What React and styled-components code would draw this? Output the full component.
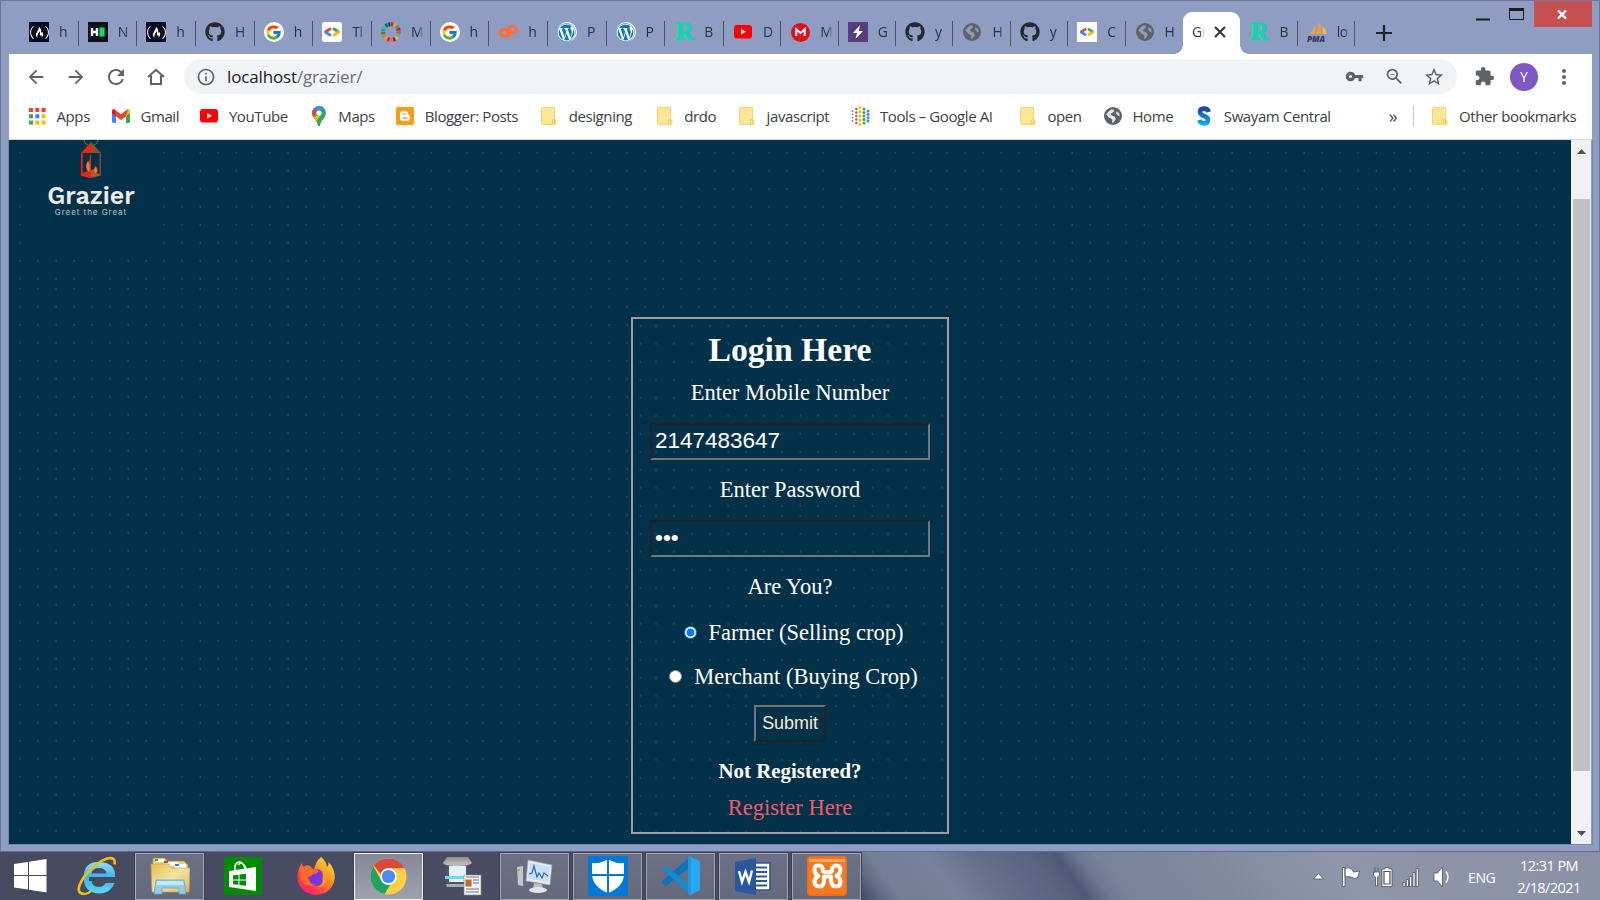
import React from "react";
import styled, { createGlobalStyle, css } from "styled-components";
import {
  MdArrowBack, MdArrowForward, MdRefresh, MdInfoOutline, MdVpnKey,
  MdZoomOut, MdStarBorder, MdExtension, MdMoreVert,
} from "react-icons/md";
import { FaFreeCodeCamp, FaGithub, FaWordpress } from "react-icons/fa";
import { FcGoogle } from "react-icons/fc";

const UI_FONT = `"Open Sans", "Noto Sans", sans-serif`;

const dotTile = (color) => {
  let dots = "";
  for (let r = 0; r < 11; r++)
    for (let c = 0; c < 13; c++)
      dots += `<rect x='${10.3 + c * 18}' y='${4.8 + r * 18}' width='1.4' height='2'/>`;
  return `url("data:image/svg+xml,${encodeURIComponent(
    `<svg xmlns='http://www.w3.org/2000/svg' width='231.67' height='190' fill='${color}'>${dots}</svg>`
  )}")`;
};

const GlobalStyle = createGlobalStyle`
  * { box-sizing: border-box; }
  body { margin: 0; overflow: hidden; background: #8f9dc3; }
  svg { display: block; flex: none; }
`;

const Desktop = styled.div`
  width: 1600px;
  height: 900px;
  display: flex;
  flex-direction: column;
  font-family: ${UI_FONT};
`;

const BrowserWindow = styled.div`
  height: 852px;
  background: #8f9dc3;
  border: 1px solid #6d7899;
  border-bottom-color: #5e6b90;
  padding: 0 7px 7px 8px;
  display: flex;
  flex-direction: column;
`;

const TitleBar = styled.div`
  height: 53px;
  flex: none;
  display: flex;
  align-items: flex-end;
  padding-left: 11px;
`;

const Tab = styled.div`
  width: ${(p) => (p.$wide ? 58.67 : 57.4)}px;
  height: 42px;
  flex: none;
  display: flex;
  align-items: center;
  padding: 0 0 2px 9px;
  gap: 10px;
  position: relative;
  ${(p) =>
    p.$divider &&
    css`
      &::after {
        content: "";
        position: absolute;
        right: 0;
        top: 9px;
        width: 1px;
        height: 25px;
        background: #4c5468;
      }
    `}
`;

const ActiveTab = styled(Tab)`
  background: #fff;
  border-radius: 9px 9px 0 0;
  gap: 8px;
  &::before,
  &::after {
    content: "";
    position: absolute;
    bottom: 0;
    width: 9px;
    height: 9px;
  }
  &::before {
    left: -9px;
    background: radial-gradient(circle at 0 0, transparent 8.5px, #fff 9px);
  }
  &::after {
    right: -9px;
    background: radial-gradient(circle at 100% 0, transparent 8.5px, #fff 9px);
  }
`;

const Favicon = styled.span`
  width: 20px;
  height: 20px;
  flex: none;
  display: flex;
  align-items: center;
  justify-content: center;
  color: ${(p) => p.$fg || "inherit"};
  background: ${(p) => p.$bg || "transparent"};
  border-radius: ${(p) => p.$r || 0};
`;

const TabTitle = styled.span`
  width: 14px;
  white-space: nowrap;
  font-size: 14px;
  line-height: 20px;
  letter-spacing: -0.5px;
  color: #2b303b;
  mask-image: linear-gradient(90deg, #000 55%, rgba(0, 0, 0, 0.15) 85%);
`;

const NewTab = styled.span`
  margin-left: 21px;
  height: 42px;
  padding-top: 13px;
`;

const Controls = styled.div`
  margin-left: auto;
  align-self: flex-start;
  display: flex;
`;

const ControlButton = styled.span`
  width: ${(p) => p.$w || 33}px;
  height: 26px;
  display: flex;
  align-items: center;
  justify-content: center;
  padding-right: 2px;
  background: ${(p) => (p.$close ? "#c75050" : "transparent")};
`;

const Toolbar = styled.div`
  height: 44px;
  flex: none;
  background: #fff;
  display: flex;
  align-items: center;
  padding: 1px 8px 0 15px;
  color: #5f6368;
`;

const ToolButton = styled.span`
  width: ${(p) => p.$w || 40}px;
  height: 28px;
  flex: none;
  display: flex;
  align-items: center;
  justify-content: center;
`;

const Omnibox = styled.div`
  height: 35px;
  flex: 1;
  margin: 0 7px 0 1px;
  display: flex;
  align-items: center;
  background: #f1f3f4;
  border-radius: 18px;
  padding: 0 3px 0 12px;
`;

const Url = styled.span`
  margin-left: 11px;
  flex: 1;
  font-size: 17px;
  line-height: 24px;
  letter-spacing: -0.15px;
  color: #6a6e73;
  b { font-weight: 400; color: #202124; }
`;

const Avatar = styled.span`
  width: 28px;
  height: 28px;
  border-radius: 50%;
  background: #7e57c2;
  color: #fff;
  font-size: 14px;
  line-height: 28px;
  text-align: center;
`;

const BookmarkBar = styled.div`
  height: 42px;
  flex: none;
  background: #fff;
  border-bottom: 1px solid #d5d8db;
  display: flex;
  align-items: center;
  gap: 21.45px;
  padding: 0 16px 5px 18px;
`;

const Bookmark = styled.span`
  display: flex;
  align-items: center;
  gap: 9.5px;
  flex: none;
`;

const BookmarkLabel = styled.span`
  width: ${(p) => p.$w}px;
  white-space: nowrap;
  font-size: 15px;
  line-height: 20px;
  letter-spacing: -0.4px;
  color: #3c4043;
`;

const More = styled.span`
  margin-left: auto;
  font-size: 18px;
  line-height: 18px;
  color: #4a4e52;
`;

const BarRule = styled.span`
  width: 1px;
  height: 20px;
  background: #c4c7cb;
  margin: 0 -6px;
`;

const Viewport = styled.div`
  height: 704px;
  flex: none;
  display: flex;
  outline: 1px solid #7784ab;
  outline-offset: 0;
  clip-path: inset(0 -1px -1px -1px);
`;

const Page = styled.main`
  width: 1562px;
  height: 704px;
  flex: none;
  display: grid;
  grid-template-rows: 177px 1fr;
  justify-items: center;
  background: #033149 ${dotTile("#1f4f68")} 0 -47px / 231.67px 190px;
`;

const Brand = styled.div`
  justify-self: start;
  width: 130px;
  height: 112px;
  margin-left: 17px;
  background: #033149;
  display: flex;
  flex-direction: column;
  align-items: center;
`;

const BrandName = styled.div`
  font: 600 25px/26px "Work Sans", Inter, sans-serif;
  letter-spacing: -0.05px;
  color: #eceae6;
  margin-top: 4px;
`;

const Tagline = styled.div`
  font: 400 8px/10px Inter, sans-serif;
  letter-spacing: 0.95px;
  color: #b9c6cb;
  margin-top: -2px;
`;

const Form = styled.form`
  width: 318px;
  height: 517px;
  border: 2px solid #a39c9f;
  background: #033149 ${dotTile("#1a4a62")} 12px 1px / 231.67px 190px;
  padding-top: 11px;
  display: flex;
  flex-direction: column;
  align-items: center;
  font-family: "Liberation Serif", serif;
  color: #fff;
`;

const Title = styled.h2`
  margin: 0;
  font-size: 33.7px;
  line-height: 40px;
`;

const Line = styled.label`
  display: flex;
  align-items: center;
  margin-top: ${(p) => p.$mt}px;
  padding-left: ${(p) => p.$indent || 0}px;
  font-size: ${(p) => p.$size || 22.5}px;
  line-height: 26px;
  font-weight: ${(p) => (p.$bold ? 700 : 400)};
  color: ${(p) => p.$color || "#fff"};
  white-space: nowrap;
`;

const Field = styled.input`
  width: 280px;
  height: 37px;
  margin: 17px 0 0;
  padding: 0 3px 2px;
  border: 2px solid;
  border-color: #222 #767676 #767676 #222;
  background: transparent;
  color: #fff;
  outline: none;
  font: 22.5px "Liberation Sans", sans-serif;
`;

const Radio = styled.input`
  appearance: none;
  width: 13px;
  height: 13px;
  margin: 0 12px 2px 1px;
  border-radius: 50%;
  border: 1px solid #8a8a8a;
  background: #fff;
  &:checked {
    border: 1px solid #0f78f5;
    background: radial-gradient(circle, #0f78f5 3.7px, #fff 4.3px);
  }
`;

const Submit = styled.button`
  width: 72px;
  height: 37px;
  margin-top: 15px;
  padding: 0;
  border: 2px solid;
  border-color: #767676 #222 #222 #767676;
  background: transparent;
  color: #faebd7;
  font: 17.92px "Liberation Sans", sans-serif;
`;

const ScrollBar = styled.div`
  width: 20px;
  background: #f1f1f1;
  display: flex;
  flex-direction: column;
  align-items: center;
`;

const ScrollArrow = styled.span`
  height: ${(p) => p.$h}px;
  padding-top: ${(p) => p.$pt}px;
`;

const Thumb = styled.div`
  width: 17px;
  height: 572px;
  background: #c1c1c1;
`;

const Taskbar = styled.div`
  height: 48px;
  display: flex;
  align-items: center;
  background:
    linear-gradient(53deg, #454b66 0, #5c6781 16px, #737f96 32px, #76829a 80px, #65708b 115px, #5d6884 145px, #58637e 165px, #4f5a76 182px, #6d7991 200px, #77839a 215px, #808a9f 300px, #8f96a9 400px, #8a91a6 618px) 862px 0 / 738px 48px no-repeat,
    linear-gradient(90deg, #474a5f 0, #494c62 500px, #4b4f65 862px);
`;

const TaskSlot = styled.span`
  width: 69px;
  height: 47px;
  margin-right: 4px;
  flex: none;
  display: flex;
  align-items: center;
  justify-content: center;
  border: 1px solid transparent;
  ${(p) =>
    p.$open &&
    css`
      border-color: #a3a7b5;
      background: linear-gradient(#6c7084, #64697e);
      box-shadow: 0 0 0 1px #3c3f52;
    `}
  ${(p) =>
    p.$active &&
    css`
      border: 1px solid #f4f5f8;
      background: linear-gradient(#858998, #9ea1ad);
      box-shadow: 0 0 0 1px #3c3f52;
    `}
`;

const StartSlot = styled.span`
  width: 62px;
  flex: none;
  padding-left: 14px;
`;

const Tray = styled.div`
  margin-left: auto;
  display: flex;
  align-items: center;
  padding: 2px 17px 0 0;
  color: #fff;
  font-size: 14.5px;
`;

const Language = styled.span`
  width: 30px;
  margin-left: 15px;
  font-size: 14px;
  letter-spacing: -0.4px;
`;

const Clock = styled.span`
  width: 68px;
  margin-left: 17px;
  text-align: center;
  line-height: 22px;
  letter-spacing: -0.55px;
  white-space: nowrap;
`;

const Globe = ({ color = "#5f6368" }) => (
  <svg width="18" height="18" viewBox="0 0 18 18">
    <circle cx="9" cy="9" r="9" fill={color} />
    <path d="M2.2 7.2 6.8 2.6 10 2.4 9.6 5 7 6.6 7.6 8.6 10.6 9.4 11.8 12 9.4 15.8 8 15.6 8.4 12.4 5 10.4Z" fill="#fff" opacity=".85" />
    <path d="M12.5 4.2 15.2 6 15.8 9.6 13.8 8.6 12 6.6Z" fill="#fff" opacity=".75" />
  </svg>
);

const TabGlobe = () => (
  <svg width="18" height="18" viewBox="0 0 18 18">
    <circle cx="9" cy="9" r="9" fill="#5f6368" />
    <path d="M2.2 7.2 6.8 2.6 10 2.4 9.6 5 7 6.6 7.6 8.6 10.6 9.4 11.8 12 9.4 15.8 8 15.6 8.4 12.4 5 10.4Z" fill="#8f9dc3" />
    <path d="M12.5 4.2 15.2 6 15.8 9.6 13.8 8.6 12 6.6Z" fill="#8f9dc3" />
  </svg>
);

const CodeMark = ({ s = 18 }) => (
  <svg width={s} height={s} viewBox="0 0 18 18" fill="none" strokeWidth="3" strokeLinecap="round">
    <path d="M7 6 2.7 8.7" stroke="#ea4335" /><path d="M2.7 9.3 7 12" stroke="#4285f4" />
    <path d="M11 6 15.3 8.7" stroke="#34a853" /><path d="M15.3 9.3 11 12" stroke="#fbbc05" />
  </svg>
);

const SdgWheel = () => (
  <svg width="20" height="20" viewBox="0 0 20 20" fill="none" strokeWidth="4.2">
    {["#e5243b", "#dda63a", "#4c9f38", "#c5192d", "#ff3a21", "#26bde2", "#fcc30b", "#a21942", "#fd6925", "#dd1367", "#fd9d24", "#bf8b2e", "#3f7e44", "#0a97d9", "#56c02b", "#00689d", "#19486a"].map((c, i) => (
      <circle key={c} cx="10" cy="10" r="7.8" stroke={c} strokeDasharray="2.3 47" transform={`rotate(${i * 21.18 - 90} 10 10)`} />
    ))}
  </svg>
);

const YouTube = ({ w = 18 }) => (
  <svg width={w} height={w * 0.75} viewBox="0 0 18 13.5">
    <rect width="18" height="13.5" rx="3" fill="#f00" /><path d="M7 4v5.5l5-2.75z" fill="#fff" />
  </svg>
);

const CPanel = () => (
  <svg width="20" height="14" viewBox="0 0 20 14" fill="none" stroke="#ff6c2c" strokeWidth="2.9">
    <path d="M9 4.700H5.200a3.100 3.100 0 0 0 0 6.300H7.300Q9 11 9.500 9L11 3.500Q11.500 1.600 13.500 1.600h1.800a3 3 0 0 1 0 6.100h-3.300" />
    <path d="M12.500 5 10.500 12.500" strokeWidth="2" />
  </svg>
);

const LetterMark = styled.b`
  font: 700 25px/20px "Liberation Serif", serif;
  color: #14d3b4;
  -webkit-text-stroke: 1px #14d3b4;
`;

const HackerEarth = () => (
  <svg width="20" height="20" viewBox="0 0 20 20">
    <path d="M4 6v8M9 6v8M4 10h5" stroke="#fff" strokeWidth="2.4" /><rect x="11.5" y="5.5" width="5" height="9" fill="#12e35c" />
  </svg>
);

const Mega = () => (
  <svg width="19" height="19" viewBox="0 0 19 19">
    <circle cx="9.5" cy="9.5" r="9.5" fill="#e3101c" />
    <path d="M5.3 13V6.2L9.5 10l4.2-3.8V13" fill="none" stroke="#fff" strokeWidth="2" />
  </svg>
);

const Bolt = () => (
  <svg width="20" height="20" viewBox="0 0 20 20"><path d="M12 3 5 11h4l-1.5 6L15 9h-4.2z" fill="#fff" /></svg>
);

const PhpMyAdmin = () => (
  <svg width="20" height="20" viewBox="0 0 20 20">
    <path d="M8.500 2 7.800 12H2.200Q6.500 8 8.500 2Z" fill="#f7a13b" /><path d="M12 0q3.500 6 2.600 12H9.200Q12 6 12 0Z" fill="#f89c2a" /><path d="M15.500 4q4 4 4 8h-3.600Z" fill="#fbb65c" />
    <text x="0" y="19.500" fontFamily="Open Sans, sans-serif" fontSize="8.200" fontWeight="800" fontStyle="italic" fill="#333a66">PMA</text>
  </svg>
);

const AppsGrid = () => (
  <svg width="17" height="17" viewBox="0 0 17 17">
    {["#ea4335", "#ea4335", "#ea4335", "#34a853", "#4285f4", "#fbbc05", "#34a853", "#fbbc05", "#fbbc05"].map((c, i) => (
      <rect key={i} x={(i % 3) * 6.3} y={Math.floor(i / 3) * 6.3} width="4" height="4" fill={c} />
    ))}
  </svg>
);

const Gmail = () => (
  <svg width="18" height="14" viewBox="0 0 18 14">
    <path d="M0 3v9.500q0 1.500 1.500 1.500H4V5z" fill="#4285f4" /><path d="M18 3v9.500q0 1.500-1.500 1.500H14V5z" fill="#34a853" />
    <path d="M14 2v5.200l4-3V2q0-2-2-2z" fill="#fbbc04" /><path d="M0 2v2.200l4 3V2L2 0Q0 0 0 2Z" fill="#c5221f" /><path d="M2 0 9 5.200 16 0 14 7.200 9 11 4 7.200Z" fill="#ea4335" />
  </svg>
);

const MapsPin = () => (
  <svg width="14" height="20" viewBox="0 0 14 20">
    <path d="M7 0a7 7 0 0 1 7 7c0 5-5.500 7-6 13H6C5.500 14 0 12 0 7a7 7 0 0 1 7-7z" fill="#34a853" />
    <path d="M1.600 2.500Q3.800 0 7 0t5 2L5 9.500Z" fill="#4285f4" /><path d="M0 7Q0 4.500 1.600 2.500L5 5.300 1.600 11Q0 9 0 7Z" fill="#ea4335" />
    <path d="M1.600 11 9 8.800 4 15.500Z" fill="#fbbc04" /><circle cx="7" cy="7" r="2.600" fill="#fff" />
  </svg>
);

const Blogger = () => (
  <svg width="18" height="18" viewBox="0 0 18 18">
    <rect width="18" height="18" rx="1.500" fill="#fb9b18" />
    <path d="M7 4h2.500Q12 4 12 6.500 12 8 13 8q1 0 1 1v2q0 3-3 3H7q-3 0-3-3V7q0-3 3-3z" fill="#fff" />
    <path d="M7.200 7.100h2M7.200 11h3.700" stroke="#fb9b18" strokeWidth="1.400" strokeLinecap="round" />
  </svg>
);

const Folder = () => (
  <svg width="16" height="18" viewBox="0 0 16 18">
    <path d="M1.500.5h12v13h1.500v3q0 1-1 1H1.500q-1 0-1-1v-15q0-1 1-1z" fill="#ffe596" stroke="#f3d569" />
    <path d="M11.500 17v-3.500q0-1 1-1h1V17" fill="#ffe596" stroke="#f0cb4a" />
  </svg>
);

const AiDots = () => (
  <svg width="19" height="20" viewBox="0 0 19 20">
    {[[1.5, 5, "#4285f4", 4, 0.9], [5.3, 3, "#ea4335", 5, 1.2], [9, 1.6, "#fbbc05", 5, 1.5], [13, 3, "#34a853", 5, 1.5], [17, 5, "#4285f4", 4, 1.5]].map(([x, y, c, n, r]) =>
      Array.from({ length: n }, (_, k) => <circle key={`${x}-${k}`} cx={x} cy={y + (k * (20 - 2 * y)) / (n - 1)} r={r} fill={c} />)
    )}
  </svg>
);

const Swayam = () => (
  <svg width="14" height="20" viewBox="0 0 14 20" fill="none" strokeWidth="4.600">
    <defs><linearGradient id="sw" gradientUnits="userSpaceOnUse" x1="0" y1="0" x2="0" y2="20"><stop offset="0" stopColor="#283593" /><stop offset=".5" stopColor="#0f79c9" /><stop offset="1" stopColor="#12b4f2" /></linearGradient></defs>
    <path d="M11.600 6Q11 2.600 7 2.600 3 2.800 3 6q0 2.500 4 4t4 4q-.300 3.400-4 3.400T2.400 14" stroke="url(#sw)" />
  </svg>
);

const HomeOutline = () => (
  <svg width="18" height="18" viewBox="0 0 18 18" fill="none" stroke="#5f6368" strokeWidth="2">
    <path d="M1 9 9 1.800 17 9M4 7.500V16h10V7.500" />
  </svg>
);

const Lantern = () => (
  <svg width="22" height="39" viewBox="0 0 22 39">
    <path d="M4 0Q4 4 8 5M18 0Q18 4 14 5" stroke="#7a6a58" fill="none" />
    <path d="M11 2 1 13h10z" fill="#ef2510" /><path d="M11 2 21 13H11z" fill="#8f5233" />
    <path d="M1.800 13v22L11 37.500" fill="none" stroke="#ef2510" strokeWidth="1.700" /><path d="M20.200 13v22L11 37.500" fill="none" stroke="#7d4a33" strokeWidth="1.500" />
    <path d="M11 14v23L2 35V33l6-2Q4 28 8 21q2 2 1.500-5z" fill="#e8240f" /><path d="M11 37V30l3-1q3 0 2-3 4 5 0 7l4 1v1.500z" fill="#b5562e" />
    <path d="M8 21q3 5 1 11-5-4-1-11zM15 26q3 4 1 8-3-2-1-8z" fill="#f67a3a" />
  </svg>
);

const StartLogo = () => (
  <svg width="33" height="34" viewBox="0 0 33 34" fill="#fff"><path d="M0 5 14 3v13H0zM15 2.800 32.500 0v16H15zM0 17h14v13.500L0 28.500zM15 17h17.500v16.500L15 30.700z" /></svg>
);

const Explorer = () => (
  <svg width="40" height="40" viewBox="0 0 40 40">
    <defs><linearGradient id="fo" x1="0" y1="0" x2="1" y2="1"><stop offset="0" stopColor="#e2bd52" /><stop offset=".5" stopColor="#f4e3a0" /><stop offset="1" stopColor="#dcb558" /></linearGradient></defs>
    <path d="M3 2h12l2 3h17l4 4v9H2z" fill="#ecd57f" stroke="#9f873f" strokeWidth=".7" />
    <path d="M6 3h8v3H6zM16 6h12v4H16zM25 8h11v4H25z" fill="#fff" /><path d="M5 3h3v2H5z" fill="#2da34f" /><path d="M14 5h4v2h-4z" fill="#dd3a2c" /><path d="M25 8h4v2h-4z" fill="#2a86d8" />
    <path d="M1 8h18l3 4h18l-1 24H2z" fill="url(#fo)" stroke="#c9a64a" strokeWidth=".7" />
    <path d="M6 24h28l2 14h-7v-6H12v6H4z" fill="#8fcdeb" stroke="#5fa7cf" strokeWidth=".8" /><path d="M7 25h26l.6 4H6.500z" fill="#c3e8f7" />
  </svg>
);

const InternetExplorer = () => (
  <svg width="40" height="40" viewBox="0 0 40 40" fill="none">
    <defs><linearGradient id="ie" x1="0" y1="0" x2="0" y2="1"><stop offset="0" stopColor="#8fe0fb" /><stop offset=".5" stopColor="#35b4ea" /><stop offset="1" stopColor="#62d3f8" /></linearGradient></defs>
    <path d="M12 21h26q1-14-15-15T6.500 21.500Q7 37 22.500 37.500 34 37 37.500 27H28.500q-2 4-6.500 4-7-.5-7.500-6H12z" fill="url(#ie)" /><path d="M14.500 17.500q1-5.500 7.500-5.500t7.500 5.500z" fill="#494c61" />
    <path d="M7 38Q-3 37 6 22.500 17 7 30 2.500q9-2 7.500 6" stroke="#efbe18" strokeWidth="2.600" /><path d="M7 38Q11 38 14 35" stroke="#efbe18" strokeWidth="2.200" />
  </svg>
);

const Store = () => (
  <svg width="38" height="38" viewBox="0 0 38 38">
    <path d="M0 0h38v38H0z" fill="#048a04" /><path d="M5 14 32 10v24L5 30z" fill="#fff" />
    <path d="M11 14V9q1-4 5-4 4 1 5 7M14 8q4-5 8 3" fill="none" stroke="#fff" strokeWidth="1.500" />
    <path d="M9 18.500l5.500-.7v4.700H9zM15.500 17.500 22 16.700v5.800h-6.500zM9 23.500h5.500v4.300L9 27.200zM15.500 23.500H22v5.300l-6.500-.8z" fill="#048a04" />
  </svg>
);

const Firefox = () => (
  <svg width="38" height="38" viewBox="0 0 38 38">
    <defs><linearGradient id="ff" x1="1" y1="0" x2=".2" y2="1"><stop offset="0" stopColor="#fff04a" /><stop offset=".45" stopColor="#ff8f20" /><stop offset=".8" stopColor="#ff3550" /><stop offset="1" stopColor="#f01d85" /></linearGradient></defs>
    <path d="M24 0q5 4 6 10 2-2 1.500-5Q38 12 37.800 21 36 36 19.500 38 3 37 .3 21 0 13 5 6q0 3 2 4 3-3 6-1l4 5Q18 5 24 0Z" fill="url(#ff)" />
    <circle cx="19" cy="20.500" r="8.500" fill="#7a36d8" /><path d="M5 10q7-3 11 2 4 0 6 2-2 3-6 3-2 3-5 3 1 7 8 8-14 3-16-8z" fill="#ff6a2c" />
    <path d="M24 12q8 3 5.500 12-2 6-9 6 6-2 5-8 1-6-1.500-10z" fill="#ff9a22" />
  </svg>
);

const Chrome = () => (
  <svg width="37" height="37" viewBox="0 0 38 38">
    <circle cx="19" cy="19" r="18.500" fill="#fdd046" />
    <path d="M19 .5A18.500 18.500 0 0 1 35.500 10.500H19a8.500 8.500 0 0 0-8 6L4 8A18.500 18.500 0 0 1 19 .5z" fill="#d94a3d" />
    <path d="M3.500 8.700 11.600 23.200A8.500 8.500 0 0 0 21 27.300L15 37A18.500 18.500 0 0 1 3.500 8.700z" fill="#1da462" />
    <circle cx="19" cy="19" r="8.500" fill="#fff" /><circle cx="19" cy="19" r="6.800" fill="#4a8af4" />
  </svg>
);

const Scanner = () => (
  <svg width="40" height="40" viewBox="0 0 40 40">
    <defs><linearGradient id="sc" x1="0" y1="0" x2="0" y2="1"><stop offset="0" stopColor="#8e8b8a" /><stop offset="1" stopColor="#c9c5c3" /></linearGradient></defs>
    <path d="M5 1h21l4 6q-2 3-15 3T1 7z" fill="url(#sc)" />
    <path d="M4 10h23l-1 21H4z" fill="#4c5460" /><path d="M7 10h17v16H7z" fill="#e4f1f8" /><path d="M3 20h24v3H3z" fill="#5fe0ea" /><path d="M4 28h22v3H5z" fill="#a9adb4" />
    <path d="M22 19h17v20H22z" fill="#f2f2f2" stroke="#888" strokeWidth=".6" /><path d="M24 21h13M31 24h6M31 27h6M24 33h13M24 36h13" stroke="#95a2b0" strokeWidth="1.300" /><path d="M23.500 23.500h6v7h-6z" fill="#c5692f" />
  </svg>
);

const Monitor = () => (
  <svg width="37" height="36" viewBox="0 0 37 36">
    <path d="M1 9 7 8v20l-5-1z" fill="#c4c6c8" /><path d="M1 12h3" stroke="#69d236" strokeWidth="2" />
    <path d="M12 2 36 7 34 27 10 23z" fill="#e9eaea" stroke="#9b9fa6" strokeWidth=".7" /><path d="M14 5 34 9 32 24 12 20.500z" fill="#c7dff5" />
    <path d="M13 16l3-1 2-7 3 11 2-4 3 5 2-5 4 3" fill="none" stroke="#2d69a8" strokeWidth="1.200" />
    <path d="M18 25l8 1 1 5H17z" fill="#b9bcc0" /><ellipse cx="22" cy="32" rx="9" ry="3" fill="#e3e4e5" />
  </svg>
);

const Defender = () => (
  <svg width="40" height="40" viewBox="0 0 40 40">
    <path d="M0 0h40v40H0z" fill="#0078d7" /><path d="M20 3Q27 8 36 7v12Q35 31 20 37 5 31 4 19V7Q13 8 20 3z" fill="#fff" /><path d="M20 2v36M3 19h34" stroke="#0078d7" strokeWidth="2" />
  </svg>
);

const VsCode = () => (
  <svg width="40" height="40" viewBox="0 0 40 40">
    <path d="M29 1v10L5 30 1 27v-2z" fill="#0d74bc" /><path d="M1 13 5 10 30 30v9z" fill="#1588cf" /><path d="M28 0 39 5v29L28 39.500 30 38V2z" fill="#28a8f0" /><path d="M27 1 30 0v39l-3-1z" fill="#2098e0" />
  </svg>
);

const Word = () => (
  <svg width="37" height="37" viewBox="0 0 37 37">
    <path d="M18 5h17v27H18z" fill="#fff" stroke="#2b579a" strokeWidth="1.600" /><path d="M21 9.500h11M21 14h11M21 18.500h11M21 23h11M21 27.500h11" stroke="#2b579a" strokeWidth="2" />
    <path d="M0 4 21 0v37L0 33z" fill="#2b579a" /><path d="M4 13 7 24 10.500 14 14 24 17 12.500" fill="none" stroke="#fff" strokeWidth="2.400" />
  </svg>
);

const Xampp = () => (
  <svg width="40" height="40" viewBox="0 0 40 40">
    <rect width="40" height="40" rx="4" fill="#ee6d17" /><rect x="1.500" y="1.500" width="37" height="37" rx="3" fill="#f5791f" /><path d="M2 3h36v3H2z" fill="#f9a468" />
    <path d="M16 15.500Q16 9.500 11.500 9.500T7.500 14q0 4 4 6-4 2-4 6t4.500 4.500 5-5.500V20.500h7V25q.500 5.500 5 5.500t4.500-4.500q0-4-4-6 4-2 4-6t-4-4.500-4.500 4.500q0 2-1.500 2h-5" fill="none" stroke="#fff" strokeWidth="4" strokeLinejoin="round" strokeLinecap="round" />
  </svg>
);

const TrayIcons = () => (
  <svg width="140" height="22" viewBox="0 0 140 22" fill="#fff" stroke="#4a5060" strokeWidth=".8">
    <path d="M.500 13 5.500 7.500 10.500 13z" />
    <path d="M29.500 1.500h2.500v19h-2.500zM32 2.500q4-2 7 1l1.500 2.500 6-1-2 7q-4 1-6.500-1-3-1-6 0z" />
    <path d="M62 1.500v4M65 1.500v4M60.500 6h6v3.500l-2 1.500v9h-2v-9l-2-1.500zM69 3h3V1.500h4V3h3v17.500H69z" /><path d="M71 5.500h6v12.500h-6z" stroke="#4a5060" strokeWidth="1.200" />
    <path d="M90 16.500h2.200v4H90zM93.300 13.500h2.200v7h-2.200zM96.600 10.500h2.200v10h-2.200zM99.900 6.500h2.200v14h-2.200zM103.200 2.500h2.200v18h-2.200z" />
    <path d="M121 7h3.500l5-6v20l-5-6H121z" /><path d="M133 5.500q4 5.500 0 11" fill="none" stroke="#fff" strokeWidth="1.300" />
  </svg>
);

const fcc = { bg: "#0a0a23", fg: "#fff", icon: <FaFreeCodeCamp size={19} /> };
const github = { fg: "#24292e", icon: <FaGithub size={20} /> };
const google = { bg: "#fff", r: "50%", icon: <FcGoogle size={17} /> };
const wp = { bg: "#fff", fg: "#1478a8", r: "50%", icon: <FaWordpress size={19} /> };
const resume = { icon: <LetterMark>R</LetterMark> };

const tabs = [
  { ...fcc, t: "h" }, { bg: "#0b141c", icon: <HackerEarth />, t: "N" }, { ...fcc, t: "h" }, { ...github, t: "H" },
  { ...google, t: "h" }, { bg: "#fff", r: "3px", icon: <CodeMark />, t: "Tl" }, { icon: <SdgWheel />, t: "M" }, { ...google, t: "h" },
  { icon: <CPanel />, t: "h" }, { ...wp, t: "P" }, { ...wp, t: "P" }, { ...resume, t: "B" },
  { icon: <YouTube />, t: "D" }, { icon: <Mega />, t: "M" }, { bg: "#563d7c", icon: <Bolt />, t: "G" }, { ...github, t: "y" },
  { icon: <TabGlobe />, t: "H" }, { ...github, t: "y" }, { bg: "#fff", icon: <CodeMark s={16} />, t: "C" }, { icon: <TabGlobe />, t: "H", last: true },
];

const bookmarks = [
  [<AppsGrid />, "Apps", 33], [<Gmail />, "Gmail", 37.5], [<YouTube />, "YouTube", 58.5], [<MapsPin />, "Maps", 35.5],
  [<Blogger />, "Blogger: Posts", 93], [<Folder />, "designing", 64.5], [<Folder />, "drdo", 31.5], [<Folder />, "javascript", 62.5],
  [<AiDots />, "Tools – Google AI", 116.5], [<Folder />, "open", 34], [<Globe />, "Home", 40.5], [<Swayam />, "Swayam Central", 105],
];

const tasks = [
  [<InternetExplorer />], [<Explorer />, "open"], [<Store />], [<Firefox />], [<Chrome />, "active"], [<Scanner />],
  [<Monitor />, "open"], [<Defender />, "open"], [<VsCode />, "open"], [<Word />, "open"], [<Xampp />, "open"],
];

export default function App() {
  return (
    <Desktop>
      <GlobalStyle />
      <BrowserWindow>
        <TitleBar>
          {tabs.map((tab, i) => (
            <Tab key={i} $wide={i < 12} $divider={!tab.last}>
              <Favicon $bg={tab.bg} $fg={tab.fg} $r={tab.r}>{tab.icon}</Favicon>
              <TabTitle>{tab.t}</TabTitle>
            </Tab>
          ))}
          <ActiveTab>
            <TabTitle>Gr</TabTitle>
            <svg width="12" height="12" viewBox="0 0 12 12" stroke="#2f3237" strokeWidth="2"><path d="M1 1l10 10M11 1 1 11" /></svg>
          </ActiveTab>
          <Tab $divider><Favicon><LetterMark>R</LetterMark></Favicon><TabTitle>B</TabTitle></Tab>
          <Tab $divider><Favicon><PhpMyAdmin /></Favicon><TabTitle>lo</TabTitle></Tab>
          <NewTab><svg width="16" height="16" viewBox="0 0 16 16" stroke="#202124" strokeWidth="2.200"><path d="M8 0v16M0 8h16" /></svg></NewTab>
          <Controls>
            <ControlButton><svg width="14" height="14" viewBox="0 0 14 14"><path d="M0 12.500h14" stroke="#1b1b1b" strokeWidth="2" /></svg></ControlButton>
            <ControlButton $w={34}><svg width="15" height="12" viewBox="0 0 15 12" fill="none" stroke="#1b1b1b"><path d="M.500.500h14v11H.500z" /><path d="M0 1.500h15" strokeWidth="3" /></svg></ControlButton>
            <ControlButton $w={58} $close><svg width="10" height="9" viewBox="0 0 10 9" stroke="#fff" strokeWidth="2.300"><path d="M1 .500 9 8.500M9 .500 1 8.500" /></svg></ControlButton>
          </Controls>
        </TitleBar>
        <Toolbar>
          <ToolButton $w={24}><MdArrowBack size={22} /></ToolButton>
          <ToolButton $w={56}><MdArrowForward size={22} /></ToolButton>
          <ToolButton $w={24}><MdRefresh size={24} /></ToolButton>
          <ToolButton $w={55}><HomeOutline /></ToolButton>
          <Omnibox>
            <MdInfoOutline size={20} />
            <Url><b>localhost</b>/grazier/</Url>
            <ToolButton><MdVpnKey size={19} /></ToolButton>
            <ToolButton><MdZoomOut size={21} /></ToolButton>
            <ToolButton><MdStarBorder size={22} /></ToolButton>
          </Omnibox>
          <ToolButton><MdExtension size={21} /></ToolButton>
          <ToolButton><Avatar>Y</Avatar></ToolButton>
          <ToolButton><MdMoreVert size={24} /></ToolButton>
        </Toolbar>
        <BookmarkBar>
          {bookmarks.map(([icon, label, w]) => (
            <Bookmark key={label}><Favicon>{icon}</Favicon><BookmarkLabel $w={w}>{label}</BookmarkLabel></Bookmark>
          ))}
          <More>»</More>
          <BarRule />
          <Bookmark><Favicon><Folder /></Favicon><BookmarkLabel $w={117}>Other bookmarks</BookmarkLabel></Bookmark>
        </BookmarkBar>
        <Viewport>
          <Page>
            <Brand>
              <Lantern />
              <BrandName>Grazier</BrandName>
              <Tagline>Greet the Great</Tagline>
            </Brand>
            <Form>
              <Title>Login Here</Title>
              <Line $mt={10}>Enter Mobile Number</Line>
              <Field defaultValue="2147483647" />
              <Line $mt={17}>Enter Password</Line>
              <Field type="password" defaultValue="123" />
              <Line $mt={17}>Are You?</Line>
              <Line $mt={20} $indent={6}><Radio type="radio" name="role" defaultChecked />Farmer (Selling crop)</Line>
              <Line $mt={18} $indent={6}><Radio type="radio" name="role" />Merchant (Buying Crop)</Line>
              <Submit type="button">Submit</Submit>
              <Line $mt={16} $size={20.9} $bold>Not Registered?</Line>
              <Line $mt={11} $color="#ec5f69">Register Here</Line>
            </Form>
          </Page>
          <ScrollBar>
            <ScrollArrow $h={59} $pt={9}><svg width="9" height="5" viewBox="0 0 9 5" fill="#505050"><path d="M0 5 4.500 0 9 5z" /></svg></ScrollArrow>
            <Thumb />
            <ScrollArrow $h={73} $pt={60}><svg width="9" height="5" viewBox="0 0 9 5" fill="#505050"><path d="M0 0 4.500 5 9 0z" /></svg></ScrollArrow>
          </ScrollBar>
        </Viewport>
      </BrowserWindow>
      <Taskbar>
        <StartSlot><StartLogo /></StartSlot>
        {tasks.map(([icon, state], i) => (
          <TaskSlot key={i} $open={state === "open"} $active={state === "active"}>{icon}</TaskSlot>
        ))}
        <Tray>
          <TrayIcons />
          <Language>ENG</Language>
          <Clock>12:31 PM<br />2/18/2021</Clock>
        </Tray>
      </Taskbar>
    </Desktop>
  );
}
